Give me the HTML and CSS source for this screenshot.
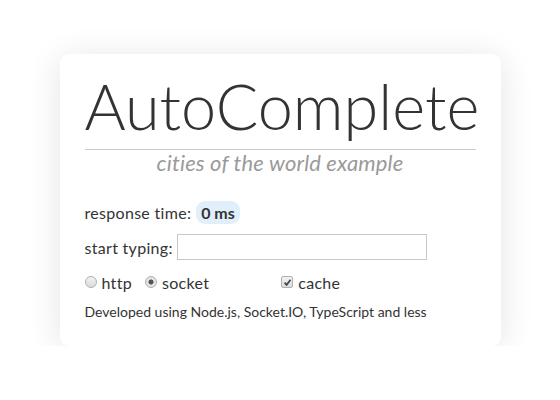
FILE: index.html
```html
<!DOCTYPE html>
<html>
<head>
<meta charset="utf-8">
<link rel="stylesheet" href="styles.css">
</head>
<body>
<div class="card">
  <h1 class="title">AutoComplete</h1>
  <div class="subtitle">cities of the world example</div>
  <div class="row">response time:<span class="badge">0 ms</span></div>
  <div class="row">start typing:<input class="field" type="text"></div>
  <div class="row opts">
    <label class="opt"><input class="radio" type="radio" name="t">http</label>
    <label class="opt"><input class="radio" type="radio" name="t" checked>socket</label>
    <label class="opt cache"><input class="check" type="checkbox" checked>cache</label>
  </div>
  <div class="foot">Developed using Node.js, Socket.IO, TypeScript and less</div>
</div>
</body>
</html>
```
FILE: styles.css
```css
html, body { margin: 0; padding: 0; background: #fff; }
body {
  font-family: Lato, "Open Sans", sans-serif;
  color: #333;
  padding-top: 54px;
}
.card {
  width: 391px;
  margin: 0 auto;
  padding: 14px 25px 25px;
  background: #fff;
  border-radius: 9px;
  box-shadow: 0 4px 34px rgba(0,0,0,0.11);
}
.title {
  margin: 0;
  padding-bottom: 5px;
  font-size: 63px;
  font-weight: 300;
  line-height: 76px;
  text-align: center;
  color: #333;
  border-bottom: 1px solid #ccc;
}
.subtitle {
  text-align: center;
  font-style: italic;
  font-size: 22px;
  letter-spacing: 0.15px;
  color: #9a9a9a;
  line-height: 26px;
  margin-bottom: 23px;
}
.row {
  font-size: 16px;
  letter-spacing: 0.3px;
  height: 26px;
  display: flex;
  align-items: center;
  margin-bottom: 9px;
}
.badge {
  margin-left: 5px;
  background: #e1effd;
  border-radius: 9px;
  height: 23px;
  line-height: 23px;
  padding: 0 5px;
  font-weight: 700;
  color: #333;
  letter-spacing: 0;
}
.field {
  width: 250px;
  height: 26px;
  box-sizing: border-box;
  border: 1px solid #c8c8c8;
  padding: 2px;
  margin: 0 0 0 4px;
}
.opts { margin-bottom: 8px; }
.opt { display: flex; align-items: center; }
.radio, .check {
  appearance: none;
  -webkit-appearance: none;
  width: 12px;
  height: 12px;
  margin: 0 5px 0 0;
  border: 1px solid #b0b0b0;
  background: linear-gradient(#f2f2f2, #dcdcdc);
}
.radio { border-radius: 50%; }
.radio:checked {
  background: radial-gradient(circle, #555 0 2.2px, #e4e4e4 2.9px);
}
.check {
  border-radius: 2px;
}
.check:checked {
  background: url("data:image/svg+xml;utf8,<svg xmlns='http://www.w3.org/2000/svg' viewBox='0 0 10 10'><path d='M1.8 5.2 L4 7.6 L8.4 2' fill='none' stroke='%23444' stroke-width='1.9'/></svg>") center/9px 9px no-repeat, linear-gradient(#f2f2f2, #dcdcdc);
}
.opt + .opt { margin-left: 13px; }
.opt.cache { margin-left: 72px; }
.foot { font-size: 14px; color: #333; line-height: 18px; }
```
